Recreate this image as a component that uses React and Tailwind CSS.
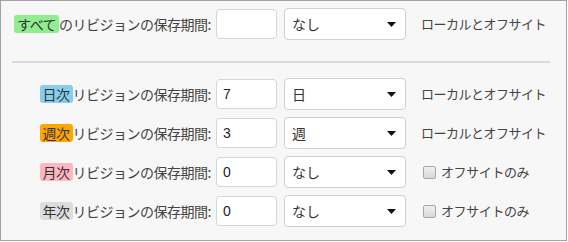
import React from 'react';

const font = { fontFamily: '"Noto Sans CJK JP", "Noto Sans", sans-serif' };

const Caret = () => (
  <svg width="9" height="5" viewBox="0 0 9 5" className="shrink-0">
    <path d="M0 0 L9 0 L4.5 5 Z" fill="#111" />
  </svg>
);

const Badge = ({ text, color }) => (
  <span className={`inline-block rounded-[3px] px-[3px] leading-[18px] text-[#333] ${color}`}>{text}</span>
);

const Row = ({ badge, color, label, value, unit, check }) => (
  <div className="flex items-center h-[32px]">
    <div className="w-[199px] text-right text-[14px] tracking-[-0.5px] text-[#444] whitespace-nowrap">
      <Badge text={badge} color={color} />
      {label}
    </div>
    <div className="ml-[5px] w-[61px] h-[30px] bg-white border border-[#d6d6d6] rounded-[4px] flex items-center pl-[6px] text-[14px] text-[#222] font-['Liberation_Sans']">
      {value}
    </div>
    <div className="ml-[7px] w-[122px] h-[32px] bg-white border border-[#cfcfcf] rounded-[4px] flex items-center justify-between pl-[7px] pr-[9px] text-[14px] text-[#333]">
      <span>{unit}</span>
      <Caret />
    </div>
    {check ? (
      <div className="ml-[17px] flex items-center text-[13px] tracking-[-0.4px] text-[#444]">
        <span className="w-[13px] h-[13px] rounded-[2px] border border-[#a8a8a8] bg-gradient-to-b from-[#f0f0f0] to-[#d8d8d8]" />
        <span className="ml-[5px]">オフサイトのみ</span>
      </div>
    ) : (
      <div className="ml-[15px] text-[13px] tracking-[-0.5px] text-[#444]">ローカルとオフサイト</div>
    )}
  </div>
);

export default function App() {
  return (
    <div style={font} className="w-[567px] h-[241px] bg-[#f7f7f7] border border-[#a3a3a3] pl-[11px] pt-[7px]">
      <Row badge="すべて" color="bg-[#90ee90]" label="のリビジョンの保存期間:" value="" unit="なし" />
      <div className="mt-[21px] w-[538px] h-[2px] bg-[#d9d9d9]" />
      <div className="mt-[15px] flex flex-col gap-[7px]">
        <Row badge="日次" color="bg-[#87ceeb]" label="リビジョンの保存期間:" value="7" unit="日" />
        <Row badge="週次" color="bg-[#ffa500]" label="リビジョンの保存期間:" value="3" unit="週" />
        <Row badge="月次" color="bg-[#ffb6c1]" label="リビジョンの保存期間:" value="0" unit="なし" check />
        <Row badge="年次" color="bg-[#dddddd]" label="リビジョンの保存期間:" value="0" unit="なし" check />
      </div>
    </div>
  );
}
